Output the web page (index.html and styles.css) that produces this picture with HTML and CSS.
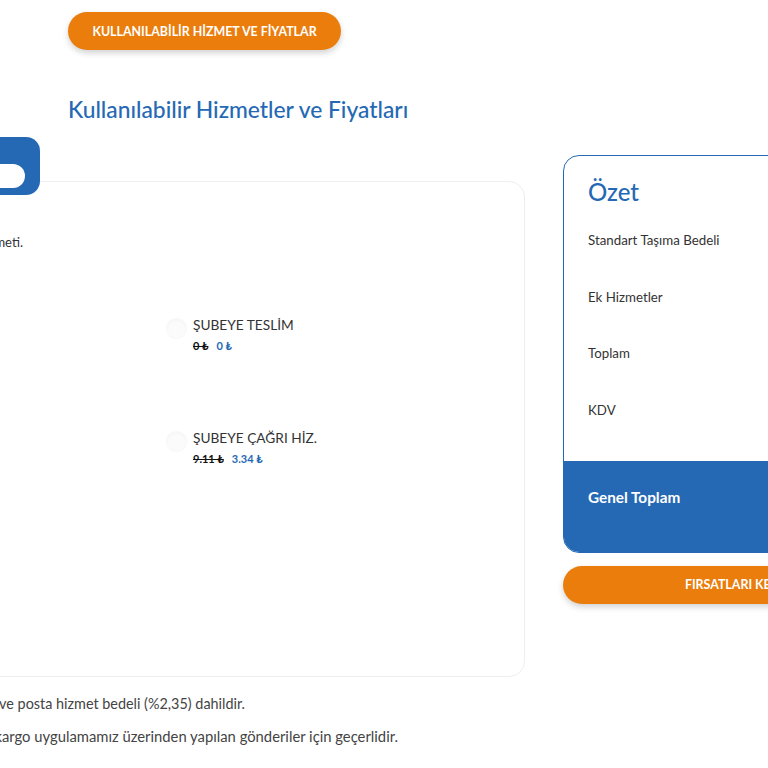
FILE: index.html
```html
<!DOCTYPE html>
<html lang="tr">
<head>
<meta charset="utf-8">
<title>Kullanılabilir Hizmetler ve Fiyatları</title>
<link rel="stylesheet" href="styles.css">
</head>
<body>
<div class="page">
  <button class="btn-orange btn-top">KULLANILABİLİR HİZMET VE FİYATLAR</button>
  <h1 class="title">Kullanılabilir Hizmetler ve Fiyatları</h1>

  <div class="row">
    <div class="left-col">
      <div class="tabbar">
        <div class="tab-pill">Gönderi Hizmetleri</div>
      </div>
      <div class="card">
        <p class="desc">Gönderiniz için ek hizmeti.</p>
        <div class="options">
          <div class="opt-col">
            <div class="option">
              <span class="radio"></span>
              <div class="opt-body">
                <div class="opt-label">ADRESE TESLİM</div>
                <div class="prices"><span class="old">0 ₺</span><span class="new">0 ₺</span></div>
              </div>
            </div>
            <div class="option">
              <span class="radio"></span>
              <div class="opt-body">
                <div class="opt-label">ADRESTEN ALIM</div>
                <div class="prices"><span class="old">9.11 ₺</span><span class="new">3.34 ₺</span></div>
              </div>
            </div>
          </div>
          <div class="opt-col">
            <div class="option">
              <span class="radio"></span>
              <div class="opt-body">
                <div class="opt-label">ŞUBEYE TESLİM</div>
                <div class="prices"><span class="old">0 ₺</span><span class="new">0 ₺</span></div>
              </div>
            </div>
            <div class="option">
              <span class="radio"></span>
              <div class="opt-body">
                <div class="opt-label">ŞUBEYE ÇAĞRI HİZ.</div>
                <div class="prices"><span class="old">9.11 ₺</span><span class="new">3.34 ₺</span></div>
              </div>
            </div>
          </div>
        </div>
      </div>
      <p class="note note-1">Fiyatlara KDV ve posta hizmet bedeli (%2,35) dahildir.</p>
      <p class="note note-2">İndirimli fiyatlar yalnızca kargo uygulamamız üzerinden yapılan gönderiler için geçerlidir.</p>
    </div>

    <div class="right-col">
      <div class="summary">
        <div class="summary-body">
          <h2 class="summary-title">Özet</h2>
          <div class="sum-row">Standart Taşıma Bedeli</div>
          <div class="sum-row">Ek Hizmetler</div>
          <div class="sum-row">Toplam</div>
          <div class="sum-row">KDV</div>
        </div>
        <div class="summary-total">Genel Toplam</div>
      </div>
      <button class="btn-orange btn-wide">FIRSATLARI KEŞFET</button>
    </div>
  </div>
</div>
</body>
</html>
```

FILE: styles.css
```css
html, body {
  margin: 0;
  padding: 0;
  background: #fff;
  overflow: hidden;
}
body {
  font-family: Lato, "Noto Sans", "DejaVu Sans", sans-serif;
  color: #333;
}
.page {
  padding: 12px 0 0 68px;
  width: 1400px;
}
.btn-orange {
  display: block;
  border: 0;
  background: #ea7d0c;
  color: #fff;
  font-family: Lato, "DejaVu Sans", sans-serif;
  font-weight: 700;
  font-size: 12.4px;
  border-radius: 19px;
  height: 38px;
  padding: 0;
  box-shadow: 0 3px 6px rgba(0, 0, 0, 0.18);
  cursor: pointer;
}
.btn-top {
  width: 273px;
}
.title {
  margin: 44px 0 0;
  font-size: 22.8px;
  line-height: 30px;
  font-weight: 500;
  color: #2569b5;
}
.row {
  display: flex;
  gap: 38px;
  margin: 13px 0 0 -328px;
  align-items: flex-start;
}
.left-col {
  width: 785px;
  flex: none;
}
.tabbar {
  position: relative;
  z-index: 1;
  height: 58px;
  width: 300px;
  background: #2569b5;
  border-radius: 14px;
  box-sizing: border-box;
  padding: 27px 15px 0 15px;
}
.tab-pill {
  height: 24px;
  background: #fff;
  border-radius: 12px;
  font-size: 12px;
  line-height: 24px;
  text-align: center;
  color: #2569b5;
  font-weight: 700;
}
.card {
  margin-top: -14px;
  height: 496px;
  box-sizing: border-box;
  border: 1px solid #eeeeee;
  border-radius: 16px;
  padding: 51px 30px 0;
  background: #fff;
}
.desc {
  margin: 0 471px 0 0;
  font-size: 13px;
  line-height: 18px;
  color: #333;
  text-align: right;
  white-space: nowrap;
}
.options {
  display: grid;
  grid-template-columns: 366px 1fr;
  column-gap: 30px;
  margin-top: 65px;
}
.opt-col {
  display: flex;
  flex-direction: column;
  gap: 75px;
}
.option {
  display: flex;
  gap: 8px;
  align-items: flex-start;
}
.radio {
  flex: none;
  width: 19px;
  height: 19px;
  margin-top: 3px;
  border-radius: 50%;
  background: radial-gradient(circle at 50% 60%, #fbfbfb 0 55%, #efefef 100%);
  box-shadow: 0 0 2px rgba(0, 0, 0, 0.12);
}
.opt-body {
  margin-left: -1px;
}
.opt-label {
  font-size: 13.7px;
  line-height: 18px;
  color: #333;
}
.prices {
  margin-top: 4px;
  display: flex;
  gap: 8px;
  font-size: 11px;
  line-height: 16px;
  font-weight: 700;
}
.old {
  color: #111;
  text-decoration: line-through;
}
.new {
  color: #2569b5;
}
.note {
  margin: 17px 0 0;
  font-size: 14.8px;
  line-height: 20px;
  color: #444;
  text-align: right;
  white-space: nowrap;
}
.note-1 {
  margin-right: 280px;
  font-size: 14.4px;
}
.note-2 {
  margin-top: 12px;
  margin-right: 127px;
}
.right-col {
  width: 358px;
  flex: none;
  margin-top: 18px;
}
.summary {
  border: 1.5px solid #2569b5;
  border-radius: 16px;
  overflow: hidden;
  background: #fff;
}
.summary-body {
  padding: 21px 24px 42px;
}
.summary-title {
  margin: 0 0 24px;
  font-size: 24px;
  line-height: 30px;
  font-weight: 500;
  color: #2569b5;
}
.sum-row {
  font-size: 13.3px;
  line-height: 18px;
  color: #333;
}
.sum-row + .sum-row {
  margin-top: 38.5px;
}
.summary-total {
  background: #2569b5;
  color: #fff;
  font-weight: 700;
  font-size: 15.3px;
  line-height: 20px;
  height: 91px;
  box-sizing: border-box;
  padding: 26px 24px 0;
}
.btn-wide {
  width: 100%;
  margin-top: 13px;
}
```
